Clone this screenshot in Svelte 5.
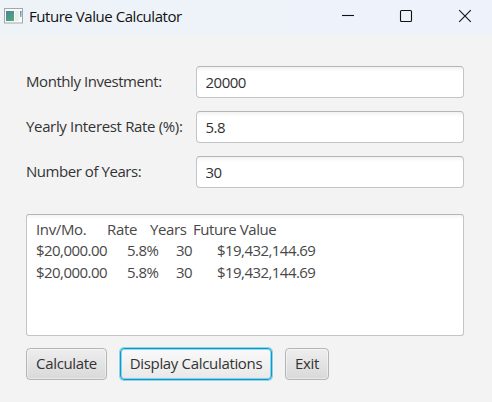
<script>
  let fields = $state([
    { label: 'Monthly Investment:', value: '20000', track: -0.44 },
    { label: 'Yearly Interest Rate (%):', value: '5.8', track: -0.34 },
    { label: 'Number of Years:', value: '30', track: -0.45 }
  ]);
  const rows = [
    ['$20,000.00', '5.8%', '30', '$19,432,144.69'],
    ['$20,000.00', '5.8%', '30', '$19,432,144.69']
  ];
</script>

<div class="window">
  <header>
    <svg class="app" width="19" height="16" viewBox="0 0 19 16">
      <defs>
        <linearGradient id="pane" x1="0" y1="0" x2="1" y2="1">
          <stop offset="0" stop-color="#4b82a0" />
          <stop offset="1" stop-color="#4fae78" />
        </linearGradient>
        <linearGradient id="bar" x1="0" y1="0" x2="0" y2="1">
          <stop offset="0" stop-color="#4b8fc0" />
          <stop offset="1" stop-color="#6cc09a" />
        </linearGradient>
      </defs>
      <rect x="0.5" y="0.5" width="18" height="14.5" fill="#fafafa" stroke="#a5a7ab" />
      <rect x="2" y="3" width="8" height="10" fill="url(#pane)" />
      <rect x="11" y="3" width="4" height="10" fill="#ededed" />
      <rect x="16" y="3" width="1.5" height="6" fill="url(#bar)" />
    </svg>
    <span class="title">Future Value Calculator</span>
    <svg class="controls" width="130" height="16" viewBox="0 0 130 16" fill="none" stroke="#111" stroke-width="1.1">
      <path d="M0 7.5H12" />
      <rect x="58.5" y="2.5" width="11" height="11" rx="1" />
      <path d="M117.2 2.2L128.8 13.8M128.8 2.2L117.2 13.8" />
    </svg>
  </header>
  <main>
    <div class="form">
      {#each fields as f}
        <label>
          <span class="name"><span style:letter-spacing="{f.track}px">{f.label}</span></span>
          <input type="text" bind:value={f.value} />
        </label>
      {/each}
    </div>
    <div class="area">
      <div class="row head"><span>Inv/Mo.</span><span>Rate</span><span>Years</span><span class="future">Future Value</span></div>
      {#each rows as r}
        <div class="row">{#each r as c}<span>{c}</span>{/each}</div>
      {/each}
    </div>
    <div class="buttons">
      <button class="calc">Calculate</button>
      <button class="display">Display Calculations</button>
      <button class="exit">Exit</button>
    </div>
  </main>
</div>

<style>
  .window {
    width: 492px;
    height: 402px;
    box-sizing: border-box;
    background: #f3f3f3;
    color: #333;
    font: 15px/20px "Open Sans", "Noto Sans", sans-serif;
    white-space: nowrap;
    overflow: hidden;
  }
  header {
    height: 34px;
    box-sizing: border-box;
    padding: 0 20px 2px 4px;
    display: flex;
    align-items: center;
    background: linear-gradient(90deg, #eef3f8, #eef2fb);
    color: #111;
  }
  .title { margin-left: 6px; padding-bottom: 1px; letter-spacing: -0.45px; }
  .controls { margin-left: auto; }
  main { padding: 32px 28px 0 26px; }
  .form { display: flex; flex-direction: column; gap: 13px; }
  label { display: flex; height: 32px; }
  .name { width: 170px; flex: none; line-height: 30px; }
  input {
    flex: 1;
    min-width: 0;
    box-sizing: border-box;
    height: 32px;
    padding: 0 8.5px 1px;
    border: 1px solid #c4c4c4;
    border-top-color: #b5b5b5;
    border-radius: 4px;
    background: linear-gradient(#f2f2f2, #fff 5px);
    font: inherit;
    letter-spacing: -0.5px;
    color: #333;
    outline: none;
  }
  .area {
    margin-top: 26px;
    height: 122px;
    box-sizing: border-box;
    padding: 4px 9px;
    border: 1px solid #c4c4c4;
    border-top-color: #b5b5b5;
    border-radius: 3px;
    background: linear-gradient(#f4f4f4, #fff 4px);
    color: #484848;
  }
  .row {
    display: grid;
    grid-template-columns: 91px 49px 41px 1fr;
    height: 21.4px;
    line-height: 21px;
    letter-spacing: -0.55px;
  }
  .head { grid-template-columns: 71px 43px 43px 1fr; letter-spacing: -0.35px; }
  .future { letter-spacing: -0.45px; }
  .buttons { display: flex; gap: 13px; margin-top: 12px; }
  button {
    height: 32px;
    box-sizing: border-box;
    padding: 0 0 2px;
    border: 1px solid #b5b5b5;
    border-radius: 4px;
    background: linear-gradient(#eee, #d9d9d9);
    box-shadow: inset 0 0 0 1px #ffffff66;
    font: inherit;
    letter-spacing: -0.33px;
    color: #333;
  }
  .calc { width: 81px; }
  .display {
    width: 152px;
    border: 1px solid #039ed3;
    box-shadow: 0 0 0 1px #039ed366, inset 0 0 0 1px #039ed366;
    background: linear-gradient(#fafafa, #e8e8e8);
  }
  .exit { width: 44px; }
</style>
